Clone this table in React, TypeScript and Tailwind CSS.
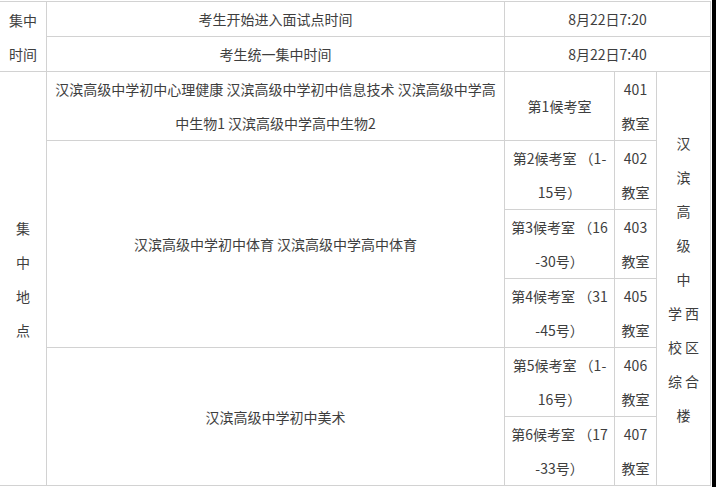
const cell = "flex items-center justify-center bg-white text-center px-1"

export default function App() {
  return (
    <div className="flex h-[487px] w-[716px] bg-black">
      <div
        className="w-[712px] bg-white pt-px text-[14px] leading-[34px] text-[#3e3e3e]"
        style={{ fontFamily: '"Noto Sans CJK SC", "Noto Sans", sans-serif' }}
      >
        <div className="grid w-[711px] grid-cols-[46px_457px_109px_41px_53px] grid-rows-[34px_34px_68px_68px_68px_68px_68px_68px] gap-px border-t border-r border-b border-[#d2d2d2] bg-[#d2d2d2]">
          {/* 集中时间 */}
          <div className={`${cell} row-span-2`}>
            集中
            <br />
            时间
          </div>
          <div className={cell}>考生开始进入面试点时间</div>
          <div className={`${cell} col-span-3`}>8月22日7:20</div>
          <div className={cell}>考生统一集中时间</div>
          <div className={`${cell} col-span-3`}>8月22日7:40</div>

          {/* 集中地点 */}
          <div className={`${cell} row-span-6`}>
            <span>
              集<br />中<br />地<br />点
            </span>
          </div>
          <div className={cell}>
            <span>
              汉滨高级中学初中心理健康 汉滨高级中学初中信息技术 汉滨高级中学高
              <br />
              中生物1 汉滨高级中学高中生物2
            </span>
          </div>
          <div className={cell}>第1候考室</div>
          <div className={cell}>
            <span>
              401
              <br />
              教室
            </span>
          </div>
          <div className={`${cell} col-start-5 row-start-3 row-span-6 whitespace-pre`}>
            {"汉\n滨\n高\n级\n中\n学 西\n校 区\n综 合\n楼"}
          </div>

          <div className={`${cell} col-start-2 row-start-4 row-span-3`}>
            汉滨高级中学初中体育 汉滨高级中学高中体育
          </div>
          <Room name="第2候考室 （1-" range="15号）" no="402" row="row-start-4" />
          <Room name="第3候考室 （16" range="-30号）" no="403" row="row-start-5" />
          <Room name="第4候考室 （31" range="-45号）" no="405" row="row-start-6" />

          <div className={`${cell} col-start-2 row-start-7 row-span-2`}>汉滨高级中学初中美术</div>
          <Room name="第5候考室 （1-" range="16号）" no="406" row="row-start-7" />
          <Room name="第6候考室 （17" range="-33号）" no="407" row="row-start-8" />
        </div>
      </div>
    </div>
  )
}

function Room({ name, range, no, row }: { name: string; range: string; no: string; row: string }) {
  return (
    <>
      <div className={`${cell} col-start-3 ${row} whitespace-pre`}>{`${name}\n${range}`}</div>
      <div className={`${cell} col-start-4 ${row}`}>
        <span>
          {no}
          <br />
          教室
        </span>
      </div>
    </>
  )
}
